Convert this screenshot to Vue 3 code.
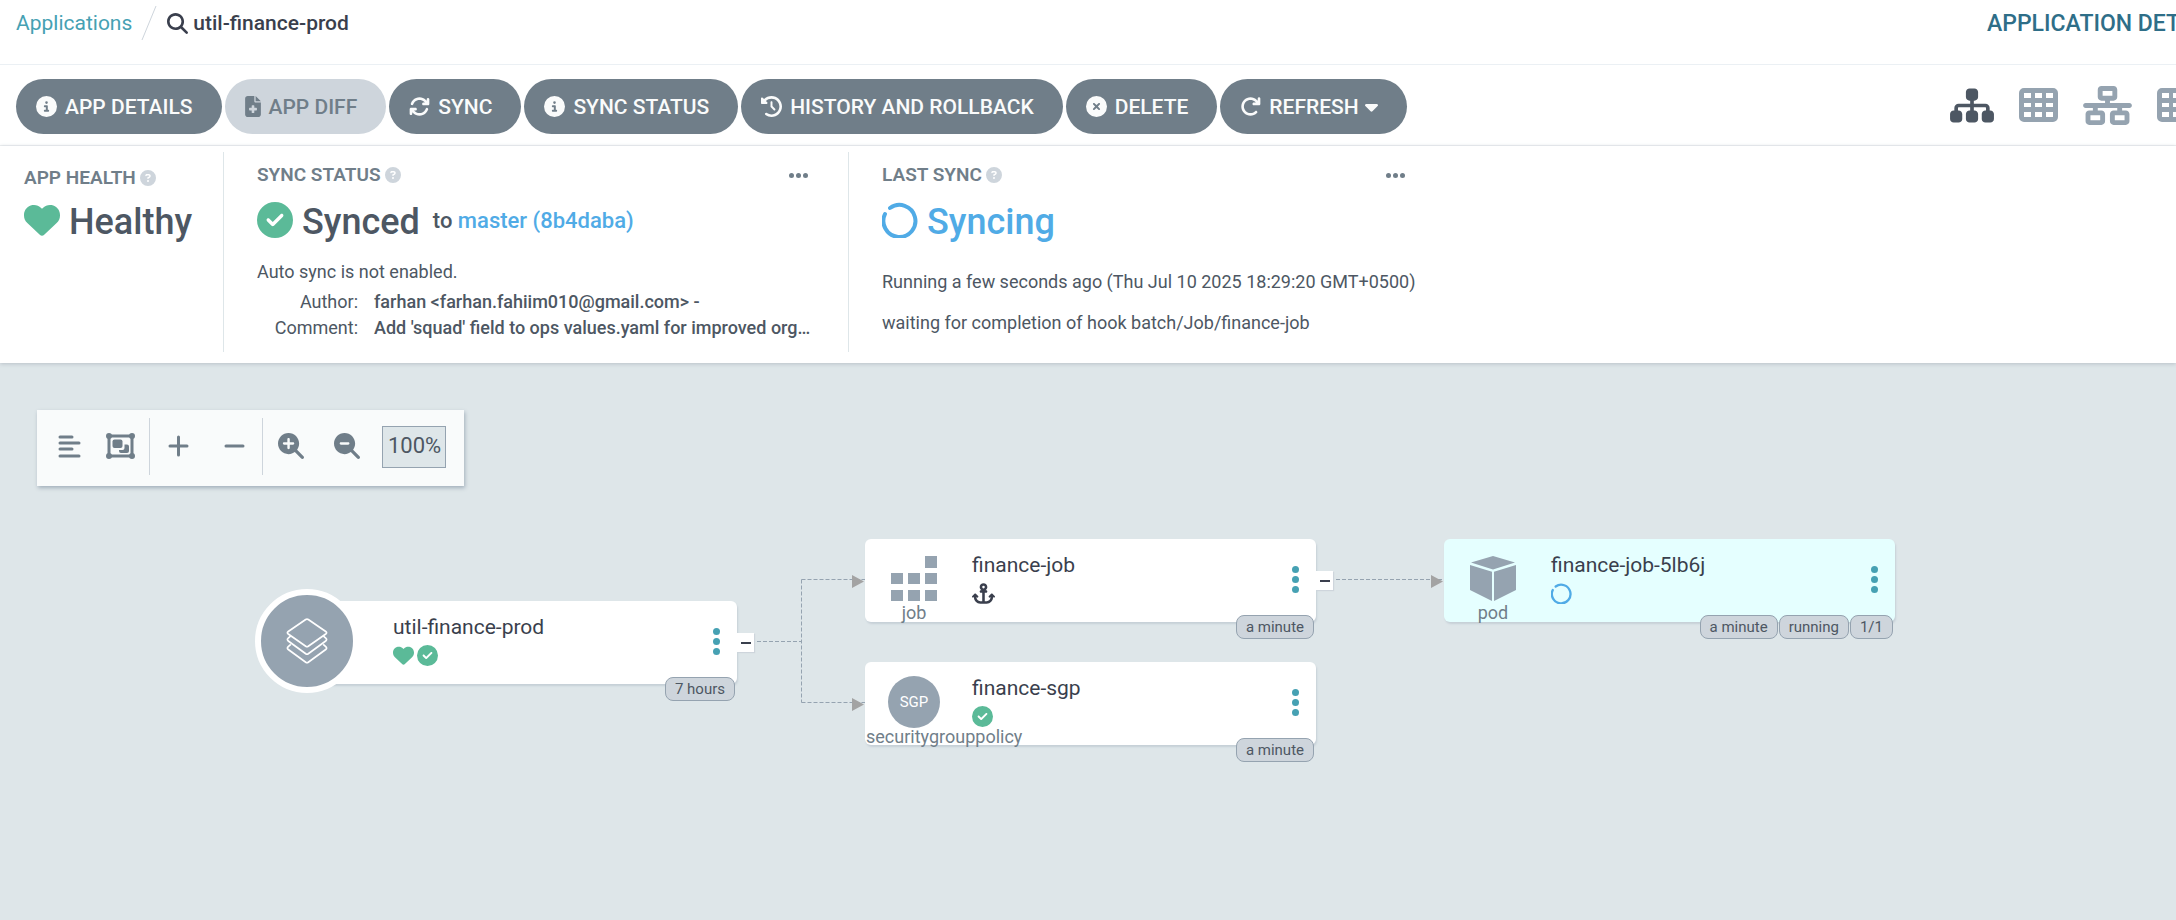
<script setup>
import { ref } from 'vue'

const lens = 'M416 208c0 45.9-14.9 88.3-40 122.7L502.6 457.4c12.5 12.5 12.5 32.8 0 45.3s-32.8 12.5-45.3 0L330.7 376c-34.4 25.2-76.8 40-122.7 40C93.1 416 0 322.9 0 208S93.1 0 208 0S416 93.1 416 208z'
const disc = 'M256 512A256 256 0 1 0 256 0a256 256 0 1 0 0 512z'
const gridShape = 'M5 0H34A5 5 0 0 1 39 5V29A5 5 0 0 1 34 34H5A5 5 0 0 1 0 29V5A5 5 0 0 1 5 0zM5 5V10H12V5zM16 5V10H23V5zM27 5V10H34V5zM5 15V19H12V15zM16 15V19H23V15zM27 15V19H34V15zM5 24V29H12V24zM16 24V29H23V24zM27 24V29H34V24z'

const icons = {
  search: { box: '0 0 512 512', d: lens + 'M208 352a144 144 0 1 0 0-288 144 144 0 1 0 0 288z' },
  zoomIn: { box: '0 0 512 512', d: lens + 'M184 296c0 13.3 10.7 24 24 24s24-10.7 24-24V232h64c13.3 0 24-10.7 24-24s-10.7-24-24-24H232V120c0-13.3-10.7-24-24-24s-24 10.7-24 24v64H120c-13.3 0-24 10.7-24 24s10.7 24 24 24h64v64z' },
  zoomOut: { box: '0 0 512 512', d: lens + 'M136 184c-13.3 0-24 10.7-24 24s10.7 24 24 24H280c13.3 0 24-10.7 24-24s-10.7-24-24-24H136z' },
  info: { box: '0 0 512 512', d: disc + 'M216 336h24V272H216c-13.3 0-24-10.7-24-24s10.7-24 24-24h48c13.3 0 24 10.7 24 24v88h8c13.3 0 24 10.7 24 24s-10.7 24-24 24H216c-13.3 0-24-10.7-24-24s10.7-24 24-24zm40-208a32 32 0 1 1 0 64 32 32 0 1 1 0-64z' },
  question: { box: '0 0 512 512', d: disc + 'M169.8 165.3c7.9-22.3 29.1-37.3 52.8-37.3h58.3c34.9 0 63.1 28.3 63.1 63.1c0 22.6-12.1 43.5-31.7 54.8L280 264.4c-.2 13-10.9 23.6-24 23.6c-13.3 0-24-10.7-24-24V250.5c0-8.6 4.6-16.5 12.1-20.8l44.3-25.4c4.7-2.7 7.6-7.7 7.6-13.1c0-8.4-6.8-15.1-15.1-15.1H222.6c-3.4 0-6.4 2.1-7.5 5.3l-.4 1.2c-4.4 12.5-18.2 19-30.6 14.6s-19-18.2-14.6-30.6l.4-1.2zM224 352a32 32 0 1 1 64 0 32 32 0 1 1 -64 0z' },
  check: { box: '0 0 512 512', d: disc + 'M369 209L241 337c-9.4 9.4-24.6 9.4-33.9 0l-64-64c-9.4-9.4-9.4-24.6 0-33.9s24.6-9.4 33.9 0l47 47L335 175c9.4-9.4 24.6-9.4 33.9 0s9.4 24.6 0 33.9z' },
  cross: { box: '0 0 512 512', d: disc + 'M175 175c9.4-9.4 24.6-9.4 33.9 0l47 47 47-47c9.4-9.4 24.6-9.4 33.9 0s9.4 24.6 0 33.9l-47 47 47 47c9.4 9.4 9.4 24.6 0 33.9s-24.6 9.4-33.9 0l-47-47-47 47c-9.4 9.4-24.6 9.4-33.9 0s-9.4-24.6 0-33.9l47-47-47-47c-9.4-9.4-9.4-24.6 0-33.9z' },
  heart: { box: '0 0 512 512', d: 'M47.6 300.4L228.3 469.1c7.5 7 17.4 10.9 27.7 10.9s20.2-3.9 27.7-10.9L464.4 300.4c30.4-28.3 47.6-68 47.6-109.5v-5.8c0-69.9-50.5-129.5-119.4-141C347 36.5 300.6 51.4 268 84L256 96 244 84c-32.6-32.6-79-47.5-124.6-39.9C50.5 55.6 0 115.2 0 185.1v5.8c0 41.5 17.2 81.2 47.6 109.5z' },
  file: { box: '0 0 384 512', d: 'M64 0C28.7 0 0 28.7 0 64V448c0 35.3 28.7 64 64 64H320c35.3 0 64-28.7 64-64V160H256c-17.7 0-32-14.3-32-32V0H64zM256 0V128H384L256 0zM160 240c0-8.8 7.2-16 16-16h32c8.8 0 16 7.2 16 16v48h48c8.8 0 16 7.2 16 16v32c0 8.8-7.2 16-16 16H224v48c0 8.8-7.2 16-16 16H176c-8.8 0-16-7.2-16-16V352H112c-8.8 0-16-7.2-16-16V304c0-8.8 7.2-16 16-16h48V240z' },
  sync: { box: '0 0 512 512', d: 'M105.1 202.6c7.7-21.8 20.2-42.3 37.8-59.8c62.5-62.5 163.8-62.5 226.3 0L386.3 160H352c-17.7 0-32 14.3-32 32s14.3 32 32 32H463.5h.4c17.7 0 32-14.3 32-32V80c0-17.7-14.3-32-32-32s-32 14.3-32 32v35.2L414.4 97.6c-87.5-87.5-229.3-87.5-316.8 0C73.2 122 55.6 150.7 44.8 181.4c-5.9 16.7 2.9 34.9 19.5 40.8s34.9-2.9 40.8-19.5zM39 289.3c-5 1.5-9.8 4.2-13.7 8.2c-4 4-6.7 8.8-8.1 14c-.3 1.2-.6 2.5-.8 3.8c-.3 1.7-.4 3.4-.4 5.1V432c0 17.7 14.3 32 32 32s32-14.3 32-32V396.9l17.6 17.5c87.5 87.4 229.3 87.4 316.7 0c24.4-24.4 42.1-53.1 52.9-83.7c5.9-16.7-2.9-34.9-19.5-40.8s-34.9 2.9-40.8 19.5c-7.7 21.8-20.2 42.3-37.8 59.8c-62.5 62.5-163.8 62.5-226.3 0l-.1-.1L125.6 352H160c17.7 0 32-14.3 32-32s-14.3-32-32-32H48.4c-1.6 0-3.2 .1-4.8 .3s-3.1 .5-4.6 1z' },
  history: { box: '0 0 512 512', d: 'M75 75L41 41C25.9 25.9 0 36.6 0 57.9V168c0 13.3 10.7 24 24 24H134.1c21.4 0 32.1-25.9 17-41l-30.8-30.8C155 85.5 203 64 256 64c106 0 192 86 192 192s-86 192-192 192c-40.8 0-78.6-12.7-109.7-34.4c-14.5-10.1-34.4-6.6-44.6 7.9s-6.6 34.4 7.9 44.6C151.2 495 201.7 512 256 512c141.4 0 256-114.6 256-256S397.4 0 256 0C185.3 0 121.3 28.7 75 75zm181 53c-13.3 0-24 10.7-24 24V256c0 6.4 2.5 12.5 7 17l72 72c9.4 9.4 24.6 9.4 33.9 0s9.4-24.6 0-33.9l-65-65V152c0-13.3-10.7-24-24-24z' },
  refresh: { box: '0 0 512 512', d: 'M386.3 160H336c-17.7 0-32 14.3-32 32s14.3 32 32 32H464c17.7 0 32-14.3 32-32V64c0-17.7-14.3-32-32-32s-32 14.3-32 32v51.2L414.4 97.6c-87.5-87.5-229.3-87.5-316.8 0s-87.5 229.3 0 316.8s229.3 87.5 316.8 0c12.5-12.5 12.5-32.8 0-45.3s-32.8-12.5-45.3 0c-62.5 62.5-163.8 62.5-226.3 0s-62.5-163.8 0-226.3s163.8-62.5 226.3 0L386.3 160z' },
  caret: { box: '0 0 320 512', d: 'M137.4 374.6c12.5 12.5 32.8 12.5 45.3 0l128-128c9.2-9.2 11.9-22.9 6.9-34.9s-16.6-19.8-29.6-19.8L32 192c-12.9 0-24.6 7.8-29.6 19.8s-2.2 25.7 6.9 34.9l128 128z' },
  sitemap: { box: '0 0 576 512', d: 'M208 80c0-26.5 21.5-48 48-48h64c26.5 0 48 21.5 48 48v64c0 26.5-21.5 48-48 48h-8v40H464c30.9 0 56 25.1 56 56v32h8c26.5 0 48 21.5 48 48v64c0 26.5-21.5 48-48 48H464c-26.5 0-48-21.5-48-48V368c0-26.5 21.5-48 48-48h8V288c0-4.4-3.6-8-8-8H312v40h8c26.5 0 48 21.5 48 48v64c0 26.5-21.5 48-48 48H256c-26.5 0-48-21.5-48-48V368c0-26.5 21.5-48 48-48h8V280H112c-4.4 0-8 3.6-8 8v32h8c26.5 0 48 21.5 48 48v64c0 26.5-21.5 48-48 48H48c-26.5 0-48-21.5-48-48V368c0-26.5 21.5-48 48-48h8V288c0-30.9 25.1-56 56-56H264V192h-8c-26.5 0-48-21.5-48-48V80z' },
  network: { box: '0 0 640 512', d: 'M256 64H384v64H256V64zM240 0c-26.5 0-48 21.5-48 48v96c0 26.5 21.5 48 48 48h48v32H32c-17.7 0-32 14.3-32 32s14.3 32 32 32h96v32H80c-26.5 0-48 21.5-48 48v96c0 26.5 21.5 48 48 48H240c26.5 0 48-21.5 48-48V368c0-26.5-21.5-48-48-48H192V288H448v32H400c-26.5 0-48 21.5-48 48v96c0 26.5 21.5 48 48 48H560c26.5 0 48-21.5 48-48V368c0-26.5-21.5-48-48-48H512V288h96c17.7 0 32-14.3 32-32s-14.3-32-32-32H352V192h48c26.5 0 48-21.5 48-48V48c0-26.5-21.5-48-48-48H240zM96 448V384H224v64H96zm320-64H544v64H416V384z' },
  grid: { box: '0 0 39 34', d: gridShape },
  anchor: { box: '0 0 576 512', d: 'M320 96a32 32 0 1 1 -64 0 32 32 0 1 1 64 0zm21.1 80C367 158.8 384 129.4 384 96c0-53-43-96-96-96s-96 43-96 96c0 33.4 17 62.8 42.9 80H224c-17.7 0-32 14.3-32 32s14.3 32 32 32h32V448H208c-53 0-96-43-96-96v-6.1l7 7c9.4 9.4 24.6 9.4 33.9 0s9.4-24.6 0-33.9L97 263c-9.4-9.4-24.6-9.4-33.9 0L7 319c-9.4 9.4-9.4 24.6 0 33.9s24.6 9.4 33.9 0l7-7V352c0 88.4 71.6 160 160 160h80 80c88.4 0 160-71.6 160-160v-6.1l7 7c9.4 9.4 24.6 9.4 33.9 0s9.4-24.6 0-33.9l-56-56c-9.4-9.4-24.6-9.4-33.9 0l-56 56c-9.4 9.4-9.4 24.6 0 33.9s24.6 9.4 33.9 0l7-7V352c0 53-43 96-96 96H320V240h32c17.7 0 32-14.3 32-32s-14.3-32-32-32H341.1z' }
}

const actions = [
  { icon: 'info', label: 'APP DETAILS' },
  { icon: 'file', label: 'APP DIFF', disabled: true },
  { icon: 'sync', label: 'SYNC' },
  { icon: 'info', label: 'SYNC STATUS' },
  { icon: 'history', label: 'HISTORY AND ROLLBACK' },
  { icon: 'cross', label: 'DELETE' },
  { icon: 'refresh', label: 'REFRESH', caret: true }
]

const views = [
  { icon: 'sitemap', name: 'Tree', active: true },
  { icon: 'grid', name: 'Pods' },
  { icon: 'network', name: 'Network' },
  { icon: 'grid', name: 'List' }
]

const nodes = [
  { id: 'root', name: 'util-finance-prod', marks: ['heart', 'check'], badges: ['7 hours'], toggle: true },
  { id: 'job', name: 'finance-job', kind: 'job', marks: ['anchor'], badges: ['a minute'], toggle: true },
  { id: 'sgp', name: 'finance-sgp', kind: 'securitygrouppolicy', marks: ['check'], badges: ['a minute'] },
  { id: 'pod', name: 'finance-job-5lb6j', kind: 'pod', marks: ['ring'], badges: ['a minute', 'running', '1/1'] }
]

const zoom = ref('100%')
</script>

<template>
  <div class="page">
    <header class="topbar">
      <nav class="crumbs" aria-label="Breadcrumb">
        <a href="#applications">Applications</a>
        <svg class="slash" viewBox="0 0 16 36" aria-hidden="true"><path d="M15 1L1 35" /></svg>
        <svg class="icon search-icon" :viewBox="icons.search.box" aria-hidden="true"><path :d="icons.search.d" /></svg>
        <span class="current">util-finance-prod</span>
      </nav>
      <h1 class="page-title">APPLICATION DETAILS TREE</h1>
    </header>

    <div class="actionbar">
      <div class="actions">
        <button v-for="a in actions" :key="a.label" type="button" class="action" :disabled="a.disabled">
          <svg class="icon action-icon" :class="a.icon" :viewBox="icons[a.icon].box" aria-hidden="true"><path fill-rule="evenodd" :d="icons[a.icon].d" /></svg>
          <span>{{ a.label }}</span>
          <svg v-if="a.caret" class="icon caret" :viewBox="icons.caret.box" aria-hidden="true"><path :d="icons.caret.d" /></svg>
        </button>
      </div>
      <div class="views">
        <button v-for="v in views" :key="v.name" type="button" class="view" :class="{ active: v.active }" :aria-label="v.name">
          <svg class="icon" :class="v.icon" :viewBox="icons[v.icon].box" aria-hidden="true"><path fill-rule="evenodd" :d="icons[v.icon].d" /></svg>
        </button>
      </div>
    </div>

    <section class="status">
      <div class="panel health">
        <h2 class="label">APP HEALTH <svg class="icon help" :viewBox="icons.question.box" aria-hidden="true"><path fill-rule="evenodd" :d="icons.question.d" /></svg></h2>
        <div class="value">
          <svg class="icon big green" :viewBox="icons.heart.box" aria-hidden="true"><path :d="icons.heart.d" /></svg>
          <strong>Healthy</strong>
        </div>
      </div>

      <div class="panel sync-panel">
        <div class="panel-head">
          <h2 class="label">SYNC STATUS <svg class="icon help" :viewBox="icons.question.box" aria-hidden="true"><path fill-rule="evenodd" :d="icons.question.d" /></svg></h2>
          <button type="button" class="more" aria-label="Sync status options"><i></i><i></i><i></i></button>
        </div>
        <div class="value">
          <svg class="icon big green" :viewBox="icons.check.box" aria-hidden="true"><path fill-rule="evenodd" :d="icons.check.d" /></svg>
          <strong>Synced</strong>
          <span class="revision">to <a href="#revision">master (8b4daba)</a></span>
        </div>
        <p class="auto">Auto sync is not enabled.</p>
        <dl class="commit">
          <dt>Author:</dt>
          <dd>farhan &lt;farhan.fahiim010@gmail.com&gt; -</dd>
          <dt>Comment:</dt>
          <dd>Add 'squad' field to ops values.yaml for improved org…</dd>
        </dl>
      </div>

      <div class="panel last-panel">
        <div class="panel-head">
          <h2 class="label">LAST SYNC <svg class="icon help" :viewBox="icons.question.box" aria-hidden="true"><path fill-rule="evenodd" :d="icons.question.d" /></svg></h2>
          <button type="button" class="more" aria-label="Last sync options"><i></i><i></i><i></i></button>
        </div>
        <div class="value syncing">
          <svg class="ring big" viewBox="0 0 36 36" aria-hidden="true"><path d="M8 6A16 16 0 1 1 3 12" /></svg>
          <strong>Syncing</strong>
        </div>
        <p class="running">Running a few seconds ago (Thu Jul 10 2025 18:29:20 GMT+0500)</p>
        <p class="waiting">waiting for completion of hook batch/Job/finance-job</p>
      </div>
    </section>

    <main class="canvas">
      <div class="toolbar">
        <div class="tools first">
          <button type="button" aria-label="Align names">
            <svg class="lines" viewBox="0 0 23 24" aria-hidden="true"><path d="M2 3H14M2 9H21M2 15H14M2 22H21" /></svg>
          </button>
          <button type="button" aria-label="Group nodes">
            <svg class="group" viewBox="0 0 29 26" aria-hidden="true">
              <path class="frame" d="M3 3H26V23H3z" />
              <path d="M3 0a3 3 0 1 0 0 6a3 3 0 1 0 0-6zM26 0a3 3 0 1 0 0 6a3 3 0 1 0 0-6zM3 20a3 3 0 1 0 0 6a3 3 0 1 0 0-6zM26 20a3 3 0 1 0 0 6a3 3 0 1 0 0-6z" />
              <rect x="6.500" y="6.500" width="10" height="8.500" rx="2" />
              <path d="M18.500 11.500H21A2 2 0 0 1 23 13.500V18A2 2 0 0 1 21 20H15A2 2 0 0 1 13 18V17H16.500A2 2 0 0 0 18.500 15z" />
            </svg>
          </button>
        </div>
        <div class="tools">
          <button type="button" aria-label="Expand all"><svg class="sign" viewBox="0 0 21 22" aria-hidden="true"><path d="M2 11H19M10.500 2V20" /></svg></button>
          <button type="button" aria-label="Collapse all"><svg class="sign" viewBox="0 0 21 22" aria-hidden="true"><path d="M2 11H19" /></svg></button>
        </div>
        <div class="tools">
          <button type="button" aria-label="Zoom in"><svg class="icon zoom-icon" :viewBox="icons.zoomIn.box" aria-hidden="true"><path fill-rule="evenodd" :d="icons.zoomIn.d" /></svg></button>
          <button type="button" aria-label="Zoom out"><svg class="icon zoom-icon" :viewBox="icons.zoomOut.box" aria-hidden="true"><path fill-rule="evenodd" :d="icons.zoomOut.d" /></svg></button>
        </div>
        <input v-model="zoom" class="zoom-level" type="text" aria-label="Zoom level">
      </div>

      <svg class="edges" width="1500" height="400" aria-hidden="true">
        <path class="edge" d="M757 278.500H801.500M801.500 216.500V339.500M801.500 216.500H865M801.500 339.500H865M1336 216.500H1444" />
        <path class="tip" d="M852 212L864 218.500L852 225zM852 335L864 341.500L852 348zM1431 212L1443 218.500L1431 225z" />
      </svg>

      <article v-for="n in nodes" :key="n.id" class="node" :class="n.id">
        <div class="kind">
          <div v-if="n.id === 'root'" class="app-disc">
            <svg viewBox="0 0 48 54" aria-hidden="true">
              <path d="M22.500 1.800Q24 .8 25.500 1.800L46 15.800Q48 17.300 46 18.800L25.500 33.200Q24 34.200 22.500 33.200L2 18.800Q0 17.300 2 15.800z" />
              <path d="M5 21L2 23.500Q0 25.500 2 27L22.500 42Q24 43 25.500 42L46 27Q48 25.500 46 23.500L43 21" />
              <path d="M5 31L2 33.500Q0 35.500 2 37L22.500 52Q24 53 25.500 52L46 37Q48 35.500 46 33.500L43 31" />
            </svg>
          </div>
          <svg v-else-if="n.id === 'job'" class="shape" viewBox="0 0 46 45" aria-hidden="true"><path d="M34 0H46V12H34zM0 17H12V28H0zM17 17H29V28H17zM34 17H46V28H34zM0 34H12V45H0zM17 34H29V45H17zM34 34H46V45H34z" /></svg>
          <svg v-else-if="n.id === 'pod'" class="shape" viewBox="0 0 46 45" aria-hidden="true"><path d="M23 0L45 6.500L23 13.500L1 6.500zM0 9L22 15.700V45L0 34zM46 9L24 15.700V45L46 34z" /></svg>
          <div v-else class="kind-disc">SGP</div>
          <span v-if="n.kind" class="kind-name">{{ n.kind }}</span>
        </div>
        <div class="body">
          <div class="name">{{ n.name }}</div>
          <div class="marks">
            <template v-for="m in n.marks" :key="m">
              <svg v-if="m === 'ring'" class="ring" viewBox="0 0 36 36" aria-hidden="true"><path d="M8 6A16 16 0 1 1 3 12" /></svg>
              <svg v-else class="icon" :class="m === 'anchor' ? 'anchor' : 'green'" :viewBox="icons[m].box" aria-hidden="true"><path fill-rule="evenodd" :d="icons[m].d" /></svg>
            </template>
          </div>
        </div>
        <button type="button" class="menu" :aria-label="n.name + ' menu'"><i></i><i></i><i></i></button>
        <button v-if="n.toggle" type="button" class="toggle" :aria-label="'Collapse ' + n.name"><i></i></button>
        <div class="badges"><span v-for="b in n.badges" :key="b">{{ b }}</span></div>
      </article>
    </main>
  </div>
</template>

<style>
body {
  margin: 0;
}
</style>

<style scoped>
* {
  box-sizing: border-box;
}
.page {
  display: flex;
  flex-direction: column;
  min-height: 100vh;
  overflow: hidden;
  background: #fff;
  color: #4d5763;
  font-family: Roboto, "Liberation Sans", sans-serif;
  font-size: 18px;
}
button {
  margin: 0;
  padding: 0;
  border: 0;
  background: none;
  color: inherit;
  font: inherit;
}
a {
  text-decoration: none;
}
svg {
  display: block;
  flex: none;
}
.icon {
  fill: currentColor;
}
.topbar {
  display: flex;
  justify-content: space-between;
  height: 65px;
  padding-left: 16px;
  border-bottom: 1px solid #ebf0f4;
}
.crumbs {
  display: flex;
  align-items: center;
  height: 46px;
  font-size: 21px;
}
.crumbs a {
  color: #46a1b3;
}
.slash {
  width: 16px;
  height: 36px;
  margin: 0 10px 0 9px;
  fill: none;
  stroke: #ced5dc;
}
.search-icon {
  width: 21px;
  height: 21px;
  margin-right: 5px;
}
.search-icon,
.current {
  color: #3a3f4d;
}
.current {
  font-weight: 500;
}
.page-title {
  width: 189px;
  margin: 0;
  color: #2e6e88;
  font-size: 23px;
  font-weight: 500;
  line-height: 47px;
  white-space: nowrap;
}
.actionbar {
  display: flex;
  align-items: center;
  justify-content: space-between;
  height: 81px;
  padding-left: 16px;
  border-bottom: 1px solid #eff1f3;
}
.actions {
  display: flex;
  gap: 3px;
  margin-top: 3px;
}
.action {
  display: flex;
  align-items: center;
  height: 55px;
  padding: 0 29px 0 20px;
  border-radius: 28px;
  background: #707e89;
  color: #fafbfb;
  font-size: 21px;
  font-weight: 500;
  white-space: nowrap;
}
.action:disabled {
  background: #ced5dc;
  color: #707e89;
}
.action-icon {
  width: 21px;
  height: 21px;
  margin-right: 8px;
}
.action-icon.file {
  width: 16px;
}
.caret {
  width: 13px;
  height: 21px;
  margin-left: 6px;
}
.views {
  display: flex;
  align-items: center;
  gap: 25px;
  width: 226px;
}
.view {
  flex: none;
  color: #95a3b0;
}
.view.active {
  color: #4d5763;
}
.view .sitemap {
  width: 44px;
  height: 39px;
}
.view .grid {
  width: 39px;
  height: 34px;
}
.view .network {
  width: 49px;
  height: 39px;
}
.status {
  position: relative;
  z-index: 1;
  display: flex;
  padding: 6px 0 11px;
  background: #fff;
  box-shadow: 0 1px 4px #b9c1c8;
}
.panel {
  min-height: 200px;
}
.panel + .panel {
  border-left: 1px solid #dee6e9;
}
.health {
  width: 223px;
  padding: 16px 0 0 24px;
}
.sync-panel {
  width: 625px;
  padding: 13px 40px 0 33px;
}
.last-panel {
  width: 590px;
  padding: 13px 33px 0 33px;
}
.panel-head {
  display: flex;
  align-items: center;
  justify-content: space-between;
}
.label {
  display: flex;
  align-items: center;
  gap: 4px;
  margin: 0;
  color: #707e89;
  font-size: 19px;
  font-weight: 600;
  line-height: 20px;
}
.help {
  width: 16px;
  height: 16px;
  color: #ced5dc;
}
.more {
  display: flex;
  gap: 2px;
}
.more i {
  width: 5px;
  height: 5px;
  border-radius: 50%;
  background: #707e89;
}
.value {
  display: flex;
  align-items: center;
  height: 48px;
  margin-top: 11px;
}
.health .value {
  margin-top: 8px;
}
.big {
  width: 36px;
  height: 36px;
  margin-right: 9px;
}
.value strong {
  padding-top: 4px;
  font-size: 36px;
  font-weight: 500;
}
.green {
  color: #5bba98;
}
.revision {
  margin-left: 13px;
  font-size: 22px;
  font-weight: 500;
}
.revision a,
.syncing {
  color: #50abe6;
}
.ring {
  fill: none;
  stroke: #50abe6;
  stroke-width: 4;
  stroke-linecap: round;
}
p {
  margin: 0;
  line-height: 26px;
  white-space: nowrap;
}
.auto {
  margin-top: 15px;
}
.commit {
  display: grid;
  grid-template-columns: 101px 1fr;
  column-gap: 16px;
  margin: 4px 0 0;
  line-height: 26px;
  white-space: nowrap;
}
.commit dt {
  text-align: right;
}
.commit dd {
  margin: 0;
  font-weight: 500;
}
.running {
  margin-top: 25px;
}
.waiting {
  margin-top: 15px;
}
.canvas {
  position: relative;
  flex: 1;
  min-height: 480px;
  padding: 47px 37px;
  background: #dee6e9;
}
.toolbar {
  display: flex;
  align-items: center;
  width: fit-content;
  height: 76px;
  padding: 0 18px 3px 12px;
  background: #f9fbfb;
  box-shadow: 1px 2px 4px #a3b0bb;
  color: #707e89;
}
.tools {
  display: flex;
  align-items: center;
  justify-content: center;
  gap: 16px;
  width: 113px;
  height: 57px;
  padding-bottom: 2px;
  border-left: 1px solid #ced5dc;
}
.tools.first {
  justify-content: flex-start;
  gap: 11px;
  width: 100px;
  border: 0;
}
.tools button {
  display: grid;
  place-items: center;
  width: 40px;
  height: 50px;
}
.toolbar svg {
  fill: currentColor;
}
.toolbar .lines,
.toolbar .sign {
  fill: none;
  stroke: currentColor;
  stroke-width: 3;
  stroke-linecap: round;
}
.lines {
  width: 23px;
  height: 24px;
}
.sign {
  width: 21px;
  height: 22px;
}
.group {
  width: 29px;
  height: 26px;
}
.toolbar .frame {
  fill: none;
  stroke: currentColor;
  stroke-width: 3;
}
.zoom-icon {
  width: 26px;
  height: 26px;
}
.zoom-level {
  width: 64px;
  height: 42px;
  margin-left: 7px;
  padding: 0 0 2px 5px;
  border: 1px solid #95a3b0;
  border-radius: 0;
  background: #dee6e9;
  color: #4d5763;
  font: 22px Roboto, sans-serif;
}
.edges {
  position: absolute;
  top: 0;
  left: 0;
}
.edge {
  fill: none;
  stroke: #95a3b0;
  stroke-dasharray: 4 2;
}
.tip {
  fill: #a3a3a3;
}
.node {
  position: absolute;
  display: flex;
  width: 451px;
  height: 83px;
  border-radius: 6px;
  background: #fff;
  box-shadow: 1px 2px 2px #c6d0d7;
}
.root {
  top: 238px;
  left: 286px;
}
.job {
  top: 176px;
  left: 865px;
}
.sgp {
  top: 299px;
  left: 865px;
}
.pod {
  top: 176px;
  left: 1444px;
  background: #e5ffff;
}
.kind {
  display: flex;
  flex-direction: column;
  align-items: center;
  width: 98px;
  padding-top: 17px;
  color: #707e89;
}
.root .kind {
  padding: 0;
}
.sgp .kind {
  align-items: flex-start;
  padding: 14px 0 0 1px;
}
.shape {
  width: 46px;
  height: 45px;
  fill: #95a3b0;
}
.kind-name {
  margin-top: 3px;
  font-size: 18px;
  line-height: 18px;
}
.sgp .kind-name {
  margin-top: 0;
}
.kind-disc {
  display: grid;
  flex: none;
  place-items: center;
  width: 52px;
  height: 52px;
  margin-left: 22px;
  border-radius: 50%;
  background: #95a3b0;
  color: #fff;
  font-size: 15px;
}
.app-disc {
  position: absolute;
  top: -12px;
  left: -31px;
  display: grid;
  place-items: center;
  width: 104px;
  height: 104px;
  border: 6px solid #fff;
  border-radius: 50%;
  background: #95a3b0;
}
.app-disc svg {
  width: 46px;
  height: 46px;
  fill: none;
  stroke: #fff;
  stroke-width: 2;
}
.body {
  padding: 14px 0 0 9px;
}
.name {
  color: #3a3f4d;
  font-size: 21px;
  line-height: 24px;
  white-space: nowrap;
}
.marks {
  display: flex;
  align-items: center;
  gap: 3px;
  margin-top: 6px;
}
.marks svg {
  width: 21px;
  height: 21px;
}
.marks .anchor {
  width: 23px;
  color: #3a3f4d;
}
.menu {
  position: absolute;
  top: 27px;
  right: 17px;
  display: flex;
  flex-direction: column;
  gap: 3px;
}
.menu i {
  width: 7px;
  height: 7px;
  border-radius: 50%;
  background: #46a1b3;
}
.toggle {
  position: absolute;
  top: 32px;
  left: 451px;
  display: grid;
  place-items: center;
  width: 17px;
  height: 19px;
  background: #fff;
  box-shadow: 1px 1px 1px #ced5dc;
}
.toggle i {
  width: 10px;
  height: 2px;
  background: #3a3f4d;
}
.badges {
  position: absolute;
  top: 76px;
  right: 2px;
  display: flex;
  gap: 1px;
}
.badges span {
  padding: 0 9px;
  border: 1px solid #95a3b0;
  border-radius: 8px;
  background: #ced5dc;
  color: #4d5763;
  font-size: 15px;
  line-height: 22px;
  white-space: nowrap;
}
</style>
